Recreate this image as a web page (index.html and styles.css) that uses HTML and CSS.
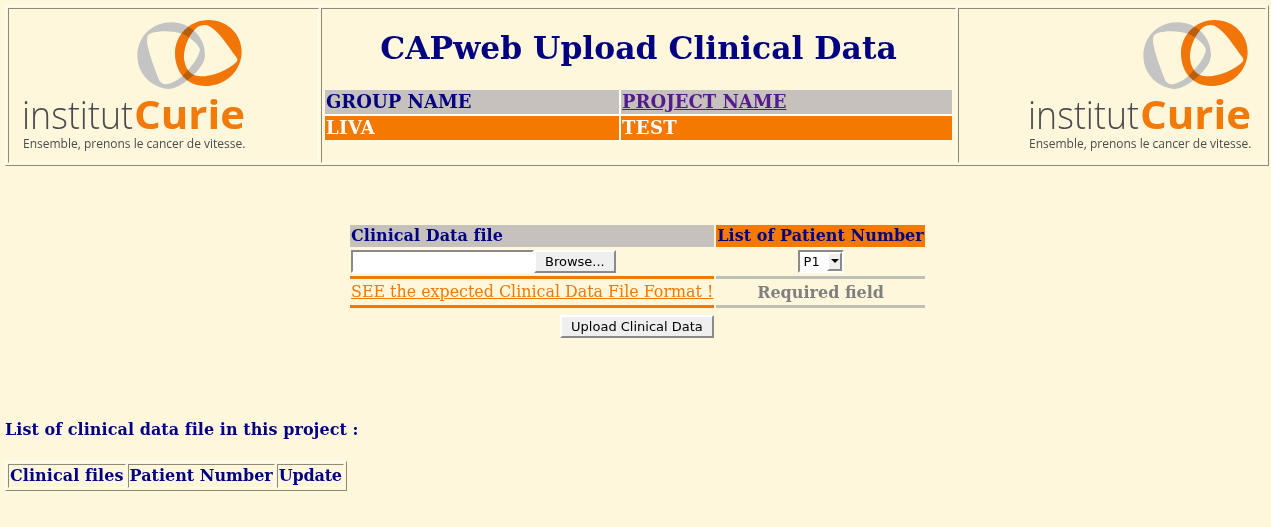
FILE: index.html
```html
<!DOCTYPE html>
<html lang="en">
<head>
    <meta charset="UTF-8">
    <title>CAPweb Upload Clinical Data</title>
    <link rel="stylesheet" href="styles.css">
</head>
<body>
<table class="head-table">
    <tr>
        <td class="logo-cell left">
            <svg class="logo" width="240" height="142" viewBox="0 0 240 142">
                <g transform="translate(116,-5) scale(0.3333)">
                    <path fill="#c4c4c4" fill-rule="evenodd" d="M22 120C25 60 70 22 125 22C180 22 225 65 225 120C225 150 190 185 160 205C145 215 130 222 115 222C80 220 22 190 22 120ZM52 65C50 80 52 90 55 100C60 125 72 155 85 190C90 203 98 209 110 208C125 205 145 195 160 180C185 155 205 130 210 105C207 90 185 70 160 58C140 50 110 47 85 50C68 52 55 55 52 65Z"/>
                    <path class="logo-blend" fill="#f27a08" fill-rule="evenodd" d="M135 115C135 60 180 15 235 15C295 15 335 60 335 110C335 165 290 213 225 213C170 213 135 170 135 115ZM162 130C165 160 180 183 210 184C250 184 295 165 320 140C324 135 322 130 318 125C295 95 265 45 235 32C225 28 210 30 200 38C180 55 160 95 162 130Z"/>
                </g>
                <text class="logo-institut" x="8" y="108.5" textLength="111" lengthAdjust="spacingAndGlyphs">institut</text>
                <text class="logo-curie" x="120" y="109" textLength="111" lengthAdjust="spacingAndGlyphs">Curie</text>
                <text class="logo-tag" x="9" y="128">Ensemble, prenons le cancer de vitesse.</text>
            </svg>
        </td>
        <td class="title-cell">
            <h1>CAPweb Upload Clinical Data</h1>
            <table class="info-table">
                <tr>
                    <td class="grey">GROUP NAME</td>
                    <td class="grey"><a href="#">PROJECT NAME</a></td>
                </tr>
                <tr>
                    <td class="orange">LIVA</td>
                    <td class="orange">TEST</td>
                </tr>
            </table>
        </td>
        <td class="logo-cell right">
            <svg class="logo" width="240" height="142" viewBox="0 0 240 142">
                <g transform="translate(116,-5) scale(0.3333)">
                    <path fill="#c4c4c4" fill-rule="evenodd" d="M22 120C25 60 70 22 125 22C180 22 225 65 225 120C225 150 190 185 160 205C145 215 130 222 115 222C80 220 22 190 22 120ZM52 65C50 80 52 90 55 100C60 125 72 155 85 190C90 203 98 209 110 208C125 205 145 195 160 180C185 155 205 130 210 105C207 90 185 70 160 58C140 50 110 47 85 50C68 52 55 55 52 65Z"/>
                    <path class="logo-blend" fill="#f27a08" fill-rule="evenodd" d="M135 115C135 60 180 15 235 15C295 15 335 60 335 110C335 165 290 213 225 213C170 213 135 170 135 115ZM162 130C165 160 180 183 210 184C250 184 295 165 320 140C324 135 322 130 318 125C295 95 265 45 235 32C225 28 210 30 200 38C180 55 160 95 162 130Z"/>
                </g>
                <text class="logo-institut" x="8" y="108.5" textLength="111" lengthAdjust="spacingAndGlyphs">institut</text>
                <text class="logo-curie" x="120" y="109" textLength="111" lengthAdjust="spacingAndGlyphs">Curie</text>
                <text class="logo-tag" x="9" y="128">Ensemble, prenons le cancer de vitesse.</text>
            </svg>
        </td>
    </tr>
</table>

<table class="form-table">
    <tr>
        <td class="grey th-file">Clinical Data file</td>
        <td class="orange-head">List of Patient Number</td>
    </tr>
    <tr>
        <td class="file-cell">
            <span class="file-text"></span><button type="button" class="btn">Browse...</button>
        </td>
        <td class="select-cell">
            <span class="select-box">P1<span class="select-arrow"></span></span>
        </td>
    </tr>
    <tr>
        <td class="format-cell"><a href="#">SEE the expected Clinical Data File Format !</a></td>
        <td class="required-cell">Required field</td>
    </tr>
    <tr>
        <td class="submit-cell"><button type="button" class="btn btn-wide">Upload Clinical Data</button></td>
        <td></td>
    </tr>
</table>

<h3>List of clinical data file in this project :</h3>

<table class="files-table">
    <tr>
        <td class="files-first">Clinical files</td>
        <td>Patient Number</td>
        <td class="files-last">Update</td>
    </tr>
</table>
</body>
</html>
```
FILE: styles.css
```css
body {
    margin: 0;
    padding: 5px 0 0 5px;
    background-color: #fff7dc;
    font-family: "DejaVu Serif", serif;
    font-size: 16px;
    font-weight: bold;
    color: #000080;
}

table {
    font-size: 16px;
}

.head-table {
    width: 1264px;
    table-layout: fixed;
    border-spacing: 2px;
    border: 1px solid;
    border-color: #fffdf5 #8f8a78 #8f8a78 #fffdf5;
}

.head-table > tbody > tr > td {
    padding: 0;
    border: 1px solid;
    border-color: #8f8a78 #fffdf5 #fffdf5 #8f8a78;
}

.head-table .left {
    width: 309px;
}

.head-table .right {
    width: 306px;
}

.logo {
    display: block;
    margin-top: 11px;
}

.left .logo {
    margin-left: 5px;
}

.right .logo {
    margin-left: 61px;
}

.logo-blend {
    mix-blend-mode: multiply;
}

.logo-institut {
    font-family: "Open Sans", sans-serif;
    font-size: 38px;
    font-weight: 300;
    fill: #4a4a50;
}

.logo-curie {
    font-family: "Open Sans", sans-serif;
    font-size: 40px;
    font-weight: 700;
    fill: #f27a08;
}

.logo-tag {
    font-family: "Open Sans", sans-serif;
    font-size: 12px;
    font-weight: 400;
    fill: #4a4a50;
}

.title-cell {
    vertical-align: top;
}

h1 {
    margin: 20px 0 23px;
    text-align: center;
    font-size: 31.4px;
    line-height: 38px;
}

.info-table {
    width: 627px;
    table-layout: fixed;
    margin: 0 0 0 3px;
    border-spacing: 0;
    font-size: 18px;
    line-height: 24px;
}

.info-table td {
    padding: 0 1px;
}

.info-table tr:first-child td {
    border-bottom: 2px solid #fffdf5;
}

.info-table td:first-child {
    width: 292px;
    border-right: 2px solid #fffdf5;
}

.grey {
    background-color: #c6c1bd;
}

.orange {
    background-color: #f57800;
    color: #fff;
    letter-spacing: 0.4px;
}

.info-table a {
    color: #551a8b;
}

.form-table {
    margin: 59px 0 0 343px;
    border-spacing: 2px 0;
}

.form-table td {
    padding: 0 1px;
}

.th-file,
.orange-head {
    line-height: 22px;
    letter-spacing: 0.04px;
}

.orange-head {
    background-color: #f57800;
    white-space: nowrap;
}

.form-table .file-cell,
.form-table .select-cell {
    padding: 3px 1px;
    vertical-align: top;
}

.file-cell {
    white-space: nowrap;
}

.file-text {
    display: inline-block;
    vertical-align: top;
    width: 183px;
    height: 23px;
    background-color: #fff;
    border: 2px solid;
    border-color: #8a8a8a #fff #fff #8a8a8a;
    box-sizing: border-box;
}

.btn {
    font-family: "DejaVu Sans", sans-serif;
    font-size: 13px;
    color: #000;
    background-color: #efefef;
    border: 2px solid;
    border-color: #fff #8a8a8a #8a8a8a #fff;
    padding: 0 9px;
    height: 23px;
    vertical-align: top;
}

.btn-wide {
    padding: 0 9.5px;
}

.select-cell {
    text-align: center;
}

.select-box {
    display: inline-flex;
    align-items: center;
    justify-content: space-between;
    vertical-align: top;
    box-sizing: border-box;
    width: 46px;
    height: 23px;
    padding-left: 4px;
    background-color: #fff;
    border: 2px solid;
    border-color: #8a8a8a #fff #fff #8a8a8a;
    font-family: "DejaVu Sans", sans-serif;
    font-size: 13px;
    font-weight: normal;
    color: #000;
    text-align: left;
}

.select-arrow {
    position: relative;
    box-sizing: border-box;
    width: 15px;
    height: 19px;
    background-color: #efefef;
    border: 2px solid;
    border-color: #fff #8a8a8a #8a8a8a #fff;
}

.select-arrow::after {
    content: "";
    position: absolute;
    left: 2px;
    top: 5px;
    border: 4px solid transparent;
    border-top-color: #000;
    border-bottom: 0;
}

.format-cell {
    border-top: 3px solid #f57800;
    border-bottom: 3px solid #f57800;
    line-height: 26px;
    font-size: 15.88px;
    font-weight: normal;
    white-space: nowrap;
}

.format-cell a {
    color: #f57800;
}

.required-cell {
    border-top: 3px solid #bfbfb8;
    border-bottom: 3px solid #bfbfb8;
    text-align: center;
    line-height: 25px;
    color: #808080;
}

.form-table .submit-cell {
    text-align: right;
    padding: 7px 0 0;
}

h3 {
    margin: 81px 0 0;
    font-size: 16px;
    line-height: 22px;
    letter-spacing: 0.05px;
}

.files-table {
    margin-top: 20px;
    border-spacing: 2px;
    border: 1px solid;
    border-color: #fffdf5 #8f8a78 #8f8a78 #fffdf5;
}

.files-table td {
    padding: 0 1px;
    line-height: 22px;
    border: 1px solid;
    border-color: #8f8a78 #fffdf5 #fffdf5 #8f8a78;
    white-space: nowrap;
}

.files-table .files-first {
    letter-spacing: 0.07px;
}

.files-table .files-last {
    letter-spacing: -0.2px;
}
```
